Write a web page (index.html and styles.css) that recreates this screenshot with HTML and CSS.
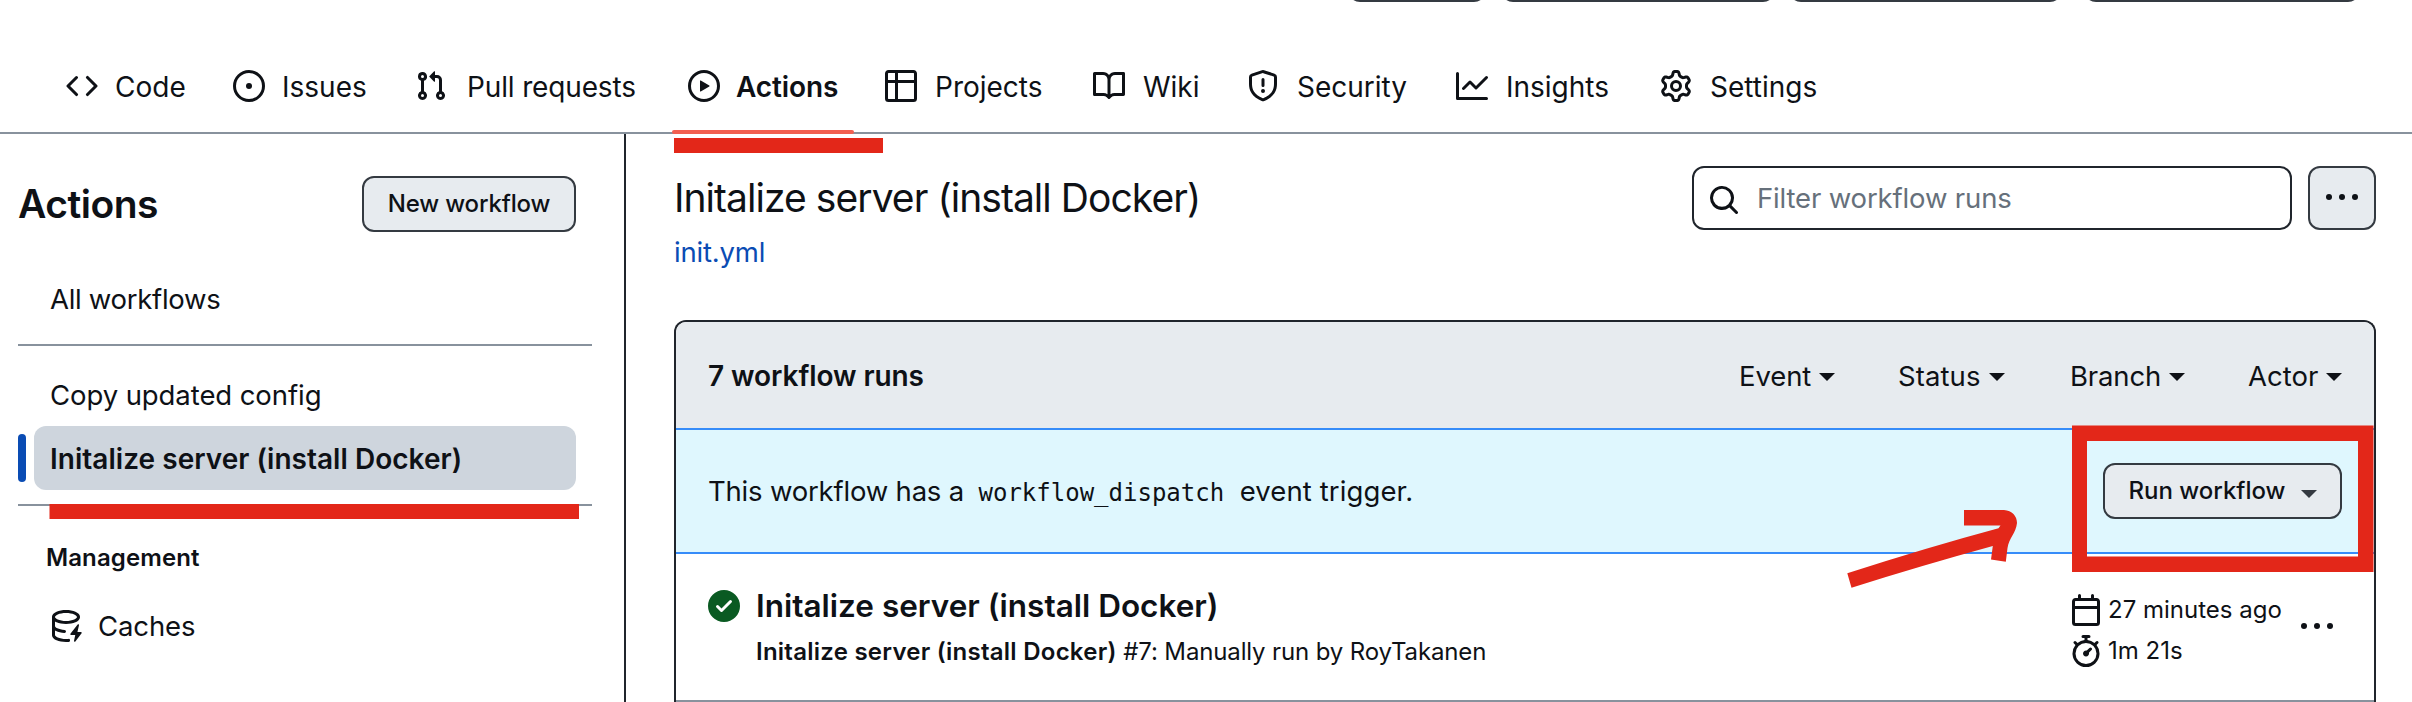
FILE: index.html
```html
<!DOCTYPE html>
<html lang="en">
<head>
<meta charset="utf-8">
<title>Actions</title>
<link rel="stylesheet" href="styles.css">
</head>
<body>
<header class="top">
  <div class="repo-buttons"><i class="rb rb-a"></i><i class="rb rb-b"></i><i class="rb rb-c"></i><i class="rb rb-d"></i></div>
  <nav class="tabs">
    <a class="tab tab-near"><svg class="icon" viewBox="0 0 16 16"><path d="M4.72 3.22a.75.75 0 0 1 1.06 1.06L2.06 8l3.72 3.72a.75.75 0 1 1-1.06 1.06L.47 8.53a.75.75 0 0 1 0-1.06l4.25-4.25Zm6.56 0a.75.75 0 1 0-1.06 1.06L13.94 8l-3.72 3.72a.75.75 0 1 0 1.06 1.06l4.25-4.25a.75.75 0 0 0 0-1.06l-4.25-4.25Z"/></svg><span class="t">Code</span></a>
    <a class="tab tab-near"><svg class="icon" viewBox="0 0 16 16"><path d="M8 9.5a1.5 1.5 0 1 0 0-3 1.5 1.5 0 0 0 0 3Z"/><path d="M8 0a8 8 0 1 1 0 16A8 8 0 0 1 8 0ZM1.5 8a6.5 6.5 0 1 0 13 0 6.5 6.5 0 0 0-13 0Z"/></svg><span class="t">Issues</span></a>
    <a class="tab tab-pulls"><svg class="icon" viewBox="0 0 16 16"><path d="M1.5 3.25a2.25 2.25 0 1 1 3 2.122v5.256a2.251 2.251 0 1 1-1.5 0V5.372A2.25 2.25 0 0 1 1.5 3.25Zm5.677-.177L9.573.677A.25.25 0 0 1 10 .854V2.5h1A2.5 2.5 0 0 1 13.5 5v5.628a2.251 2.251 0 1 1-1.5 0V5a1 1 0 0 0-1-1h-1v1.646a.25.25 0 0 1-.427.177L7.177 3.427a.25.25 0 0 1 0-.354ZM3.75 2.5a.75.75 0 1 0 0 1.5.75.75 0 0 0 0-1.5Zm0 9.5a.75.75 0 1 0 0 1.5.75.75 0 0 0 0-1.5Zm8.25.75a.75.75 0 1 0 1.5 0 .75.75 0 0 0-1.5 0Z"/></svg><span class="t">Pull requests</span></a>
    <a class="tab tab-current"><svg class="icon" viewBox="0 0 16 16"><path d="M8 0a8 8 0 1 1 0 16A8 8 0 0 1 8 0ZM1.5 8a6.5 6.5 0 1 0 13 0 6.5 6.5 0 0 0-13 0Zm4.879-2.773 4.264 2.559a.25.25 0 0 1 0 .428l-4.264 2.559A.25.25 0 0 1 6 10.559V5.442a.25.25 0 0 1 .379-.215Z"/></svg><span class="t">Actions</span></a>
    <a class="tab"><svg class="icon" viewBox="0 0 16 16"><path d="M0 1.75C0 .784.784 0 1.75 0h12.5C15.216 0 16 .784 16 1.75v12.5A1.75 1.75 0 0 1 14.25 16H1.75A1.75 1.75 0 0 1 0 14.25ZM6.5 6.5v8h7.75a.25.25 0 0 0 .25-.25V6.5Zm8-1.5V1.75a.25.25 0 0 0-.25-.25H6.5V5Zm-13 1.5v7.75c0 .138.112.25.25.25H5v-8ZM5 5V1.5H1.75a.25.25 0 0 0-.25.25V5Z"/></svg><span class="t">Projects</span></a>
    <a class="tab"><svg class="icon" viewBox="0 0 16 16"><path d="M0 1.75A.75.75 0 0 1 .75 1h4.253c1.227 0 2.317.59 3 1.501A3.743 3.743 0 0 1 11.006 1h4.245a.75.75 0 0 1 .75.75v10.5a.75.75 0 0 1-.75.75h-4.507a2.25 2.25 0 0 0-1.591.659l-.622.621a.75.75 0 0 1-1.06 0l-.622-.621A2.25 2.25 0 0 0 5.258 13H.75a.75.75 0 0 1-.75-.75Zm7.251 10.324.004-5.073-.002-2.253A2.25 2.25 0 0 0 5.003 2.5H1.5v9h3.757a3.75 3.75 0 0 1 1.994.574ZM8.755 4.75l-.004 7.322a3.752 3.752 0 0 1 1.992-.572H14.5v-9h-3.495a2.25 2.25 0 0 0-2.25 2.25Z"/></svg><span class="t">Wiki</span></a>
    <a class="tab"><svg class="icon" viewBox="0 0 16 16"><path d="M7.467.133a1.748 1.748 0 0 1 1.066 0l5.25 1.68A1.75 1.75 0 0 1 15 3.48V7c0 1.566-.32 3.182-1.303 4.682-.983 1.498-2.585 2.813-5.032 3.855a1.697 1.697 0 0 1-1.33 0c-2.447-1.042-4.049-2.357-5.032-3.855C1.32 10.182 1 8.566 1 7V3.48a1.75 1.75 0 0 1 1.217-1.667Zm.61 1.429a.25.25 0 0 0-.153 0l-5.25 1.68a.25.25 0 0 0-.174.238V7c0 1.358.275 2.666 1.057 3.86.784 1.194 2.121 2.34 4.366 3.297a.196.196 0 0 0 .154 0c2.245-.956 3.582-2.104 4.366-3.298C13.225 9.666 13.5 8.36 13.5 7V3.48a.251.251 0 0 0-.174-.237l-5.25-1.68ZM8.75 4.75v3a.75.75 0 0 1-1.5 0v-3a.75.75 0 0 1 1.5 0ZM9 10.5a1 1 0 1 1-2 0 1 1 0 0 1 2 0Z"/></svg><span class="t">Security</span></a>
    <a class="tab"><svg class="icon" viewBox="0 0 16 16"><path d="M1.5 1.75V13.5h13.75a.75.75 0 0 1 0 1.5H.75a.75.75 0 0 1-.75-.75V1.75a.75.75 0 0 1 1.5 0Zm14.28 2.53-5.25 5.25a.75.75 0 0 1-1.06 0L7 7.06 4.28 9.78a.751.751 0 0 1-1.042-.018.751.751 0 0 1-.018-1.042l3.25-3.25a.75.75 0 0 1 1.06 0L10 7.94l4.72-4.72a.751.751 0 0 1 1.042.018.751.751 0 0 1 .018 1.042Z"/></svg><span class="t">Insights</span></a>
    <a class="tab"><svg class="icon" viewBox="0 0 16 16"><path d="M8 0a8.2 8.2 0 0 1 .701.031C9.444.095 9.99.645 10.16 1.29l.288 1.107c.018.066.079.158.212.224.231.114.454.243.668.386.123.082.233.09.299.071l1.103-.303c.644-.176 1.392.021 1.82.63.27.385.506.792.704 1.218.315.675.111 1.422-.364 1.891l-.814.806c-.049.048-.098.147-.088.294.016.257.016.515 0 .772-.01.147.038.246.088.294l.814.806c.475.469.679 1.216.364 1.891a7.977 7.977 0 0 1-.704 1.217c-.428.61-1.176.807-1.82.63l-1.102-.302c-.067-.019-.177-.011-.3.071a5.909 5.909 0 0 1-.668.386c-.133.066-.194.158-.211.224l-.29 1.106c-.168.646-.715 1.196-1.458 1.26a8.006 8.006 0 0 1-1.402 0c-.743-.064-1.289-.614-1.458-1.26l-.289-1.106c-.018-.066-.079-.158-.212-.224a5.738 5.738 0 0 1-.668-.386c-.123-.082-.233-.09-.299-.071l-1.103.303c-.644.176-1.392-.021-1.82-.63a8.12 8.12 0 0 1-.704-1.218c-.315-.675-.111-1.422.363-1.891l.815-.806c.05-.048.098-.147.088-.294a6.214 6.214 0 0 1 0-.772c.01-.147-.038-.246-.088-.294l-.815-.806C.635 6.045.431 5.298.746 4.623a7.92 7.92 0 0 1 .704-1.217c.428-.61 1.176-.807 1.82-.63l1.102.302c.067.019.177.011.3-.071.214-.143.437-.272.668-.386.133-.066.194-.158.211-.224l.29-1.106C6.009.645 6.556.095 7.299.03 7.53.01 7.764 0 8 0Zm-.571 1.525c-.036.003-.108.036-.137.146l-.289 1.105c-.147.561-.549.967-.998 1.189-.173.086-.34.183-.5.29-.417.278-.97.423-1.529.27l-1.103-.303c-.109-.03-.175.016-.195.045-.22.312-.412.644-.573.99-.014.031-.021.11.059.19l.815.806c.411.406.562.957.53 1.456a4.709 4.709 0 0 0 0 .582c.032.499-.119 1.05-.53 1.456l-.815.806c-.081.08-.073.159-.059.19.162.346.353.677.573.989.02.03.085.076.195.046l1.102-.303c.56-.153 1.113-.008 1.53.27.161.107.328.204.501.29.447.222.85.629.997 1.189l.289 1.105c.029.109.101.143.137.146a6.6 6.6 0 0 0 1.142 0c.036-.003.108-.036.137-.146l.289-1.105c.147-.561.549-.967.998-1.189.173-.086.34-.183.5-.29.417-.278.97-.423 1.529-.27l1.103.303c.109.029.175-.016.195-.045.22-.313.411-.644.573-.99.014-.031.021-.11-.059-.19l-.815-.806c-.411-.406-.562-.957-.53-1.456a4.709 4.709 0 0 0 0-.582c-.032-.499.119-1.05.53-1.456l.815-.806c.081-.08.073-.159.059-.19a6.464 6.464 0 0 0-.573-.989c-.02-.03-.085-.076-.195-.046l-1.102.303c-.56.153-1.113.008-1.53-.27a4.44 4.44 0 0 0-.501-.29c-.447-.222-.85-.629-.997-1.189l-.289-1.105c-.029-.11-.101-.143-.137-.146a6.6 6.6 0 0 0-1.142 0ZM11 8a3 3 0 1 1-6 0 3 3 0 0 1 6 0ZM9.5 8a1.5 1.5 0 1 0-3.001.001A1.5 1.5 0 0 0 9.5 8Z"/></svg><span class="t">Settings</span></a>
  </nav>
</header>
<div class="page">
  <aside class="sidebar">
    <div class="side-head"><h2 class="side-title">Actions</h2><button class="btn btn-new">New workflow</button></div>
    <a class="side-item side-all">All workflows</a>
    <hr class="rule rule-first">
    <a class="side-item side-copy">Copy updated config</a>
    <a class="side-item side-current">Initalize server (install Docker)</a>
    <hr class="rule">
    <h3 class="side-group">Management</h3>
    <a class="side-item side-caches"><svg class="icon" viewBox="0 0 16 16"><path d="M2.5 5.724V8c0 .248.238.7 1.169 1.159.874.43 2.144.745 3.62.822a.75.75 0 1 1-.078 1.498c-1.622-.085-3.102-.432-4.204-.975a5.565 5.565 0 0 1-.507-.28V12.5c0 .133.058.318.282.551.227.237.591.483 1.101.707 1.015.447 2.47.742 4.117.742.406 0 .802-.018 1.183-.052a.751.751 0 1 1 .134 1.494C8.89 15.98 8.45 16 8 16c-1.805 0-3.475-.32-4.721-.869-.623-.274-1.173-.619-1.579-1.041-.408-.425-.7-.964-.7-1.59v-9c0-.626.292-1.165.7-1.591.406-.42.956-.766 1.579-1.04C4.525.32 6.195 0 8 0c1.806 0 3.476.32 4.721.869.623.274 1.173.619 1.579 1.041.408.425.7.964.7 1.59 0 .626-.292 1.165-.7 1.591-.406.42-.956.766-1.578 1.04C11.476 6.68 9.806 7 8 7c-1.805 0-3.475-.32-4.721-.869a6.15 6.15 0 0 1-.779-.407Zm0-2.224c0 .133.058.318.282.551.227.237.591.483 1.101.707C4.898 5.205 6.353 5.5 8 5.5c1.646 0 3.101-.295 4.118-.742.508-.224.873-.471 1.1-.708.224-.232.282-.417.282-.55 0-.133-.058-.318-.282-.551-.227-.237-.591-.483-1.101-.707C11.102 1.795 9.647 1.5 8 1.5c-1.646 0-3.101.295-4.118.742-.508.224-.873.471-1.1.708-.224.232-.282.417-.282.55Z"/><path d="M14.49 7.582a.375.375 0 0 0-.66-.313l-3.625 4.625a.375.375 0 0 0 .295.606h2.127l-.619 2.922a.375.375 0 0 0 .666.304l3.125-4.125A.375.375 0 0 0 15.5 11h-1.778l.769-3.418Z"/></svg>Caches</a>
  </aside>
  <main class="main">
    <div class="main-head">
      <div class="main-titles"><h1 class="title">Initalize server (install Docker)</h1><a class="file">init.yml</a></div>
      <div class="search"><svg class="icon" viewBox="0 0 16 16"><path d="M10.68 11.74a6 6 0 0 1-7.922-8.982 6 6 0 0 1 8.982 7.922l3.04 3.04a.749.749 0 1 1-1.06 1.06l-3.04-3.04ZM11.5 7a4.499 4.499 0 1 0-8.997 0A4.499 4.499 0 0 0 11.5 7Z"/></svg>Filter workflow runs</div>
      <button class="btn btn-more"><svg class="icon" viewBox="0 0 16 16"><circle cx="1.5" cy="8" r="1.5"/><circle cx="8" cy="8" r="1.5"/><circle cx="14.5" cy="8" r="1.5"/></svg></button>
    </div>
    <section class="runs">
      <div class="runs-head"><strong class="runs-count">7 workflow runs</strong>
        <span class="filter f-event">Event<i class="caret"></i></span><span class="filter f-status">Status<i class="caret"></i></span><span class="filter f-branch">Branch<i class="caret"></i></span><span class="filter f-actor">Actor<i class="caret"></i></span>
      </div>
      <div class="dispatch"><p class="dispatch-text">This workflow has a <code class="code">workflow_dispatch</code> <span class="dispatch-end">event trigger.</span></p><button class="btn btn-run">Run workflow<i class="caret"></i></button></div>
      <div class="run">
        <svg class="icon check" viewBox="0 0 16 16"><path d="M8 16A8 8 0 1 1 8 0a8 8 0 0 1 0 16Zm3.78-9.72a.751.751 0 0 0-.018-1.042.751.751 0 0 0-1.042-.018L6.75 9.19 5.28 7.72a.751.751 0 0 0-1.042.018.751.751 0 0 0-.018 1.042l2 2a.75.75 0 0 0 1.06 0Z"/></svg>
        <div class="run-body"><div class="run-title">Initalize server (install Docker)</div><div class="run-sub"><b class="run-name">Initalize server (install Docker)</b> #7: Manually run by RoyTakanen</div></div>
        <div class="run-meta">
          <div class="meta"><svg class="icon" viewBox="0 0 16 16"><path d="M4.75 0a.75.75 0 0 1 .75.75V2h5V.75a.75.75 0 0 1 1.5 0V2h1.25c.966 0 1.75.784 1.75 1.75v10.5A1.75 1.75 0 0 1 13.25 16H2.75A1.75 1.75 0 0 1 1 14.25V3.75C1 2.784 1.784 2 2.75 2H4V.75A.75.75 0 0 1 4.75 0ZM2.5 7.5v6.75c0 .138.112.25.25.25h10.5a.25.25 0 0 0 .25-.25V7.5Zm10.75-4H2.75a.25.25 0 0 0-.25.25V6h11V3.75a.25.25 0 0 0-.25-.25Z"/></svg>27 minutes ago</div>
          <div class="meta"><svg class="icon" viewBox="0 0 16 16"><path d="M5.75.75A.75.75 0 0 1 6.5 0h3a.75.75 0 0 1 0 1.5h-.75v1l-.001.041a6.724 6.724 0 0 1 3.464 1.435l.007-.006.75-.75a.749.749 0 0 1 1.275.326.749.749 0 0 1-.215.734l-.75.75-.006.007a6.75 6.75 0 1 1-10.548 0L2.72 5.03l-.75-.75a.751.751 0 0 1 .018-1.042.751.751 0 0 1 1.042-.018l.75.75.007.006A6.72 6.72 0 0 1 7.25 2.541V1.5H6.5a.75.75 0 0 1-.75-.75ZM8 14.5a5.25 5.25 0 1 0-.001-10.501A5.25 5.25 0 0 0 8 14.5Zm.389-6.7 1.33-1.33a.75.75 0 1 1 1.061 1.06L9.45 8.861A1.503 1.503 0 0 1 8 10.75a1.499 1.499 0 1 1 .389-2.95Z"/></svg>1m 21s</div>
        </div>
        <svg class="icon run-more" viewBox="0 0 16 16"><circle cx="1.5" cy="8" r="1.5"/><circle cx="8" cy="8" r="1.5"/><circle cx="14.5" cy="8" r="1.5"/></svg>
      </div>
    </section>
  </main>
</div>
<svg class="marks" viewBox="0 0 2412 702">
  <path d="M674 138h209v15H674ZM49.500 504h529.500v15H49.500Z"/>
  <path fill-rule="evenodd" d="M2072 425.500h301.500v146.500H2072ZM2087 441v115.500h271V441Z"/>
  <path d="M1847.300 573.300Q1925 548 1998.500 528.200L2000.500 525.500H1964V510H2004C2012 510.500 2017 516 2017 523C2016 533 2009 538 2007.500 548L2005.800 561.700 1991 559.500 1992.800 546Q1920 566 1851.500 587.700Z"/>
</svg>
</body>
</html>
```
FILE: styles.css
```css
* { box-sizing: border-box; }
body { margin: 0; width: 2412px; height: 702px; overflow: hidden; position: relative; background: #fff; color: #0e1116; font: 400 28px/42px Inter, "Liberation Sans", sans-serif; display: flex; flex-direction: column; }
h1, h2, h3, p, hr { margin: 0; }
.icon { width: 32px; height: 32px; fill: currentColor; flex: none; display: block; }

.top { height: 134px; flex: none; border-bottom: 2px solid #88929d; }
.repo-buttons { height: 38px; display: flex; padding-left: 1348px; }
.rb { height: 2px; overflow: hidden; display: flex; align-items: flex-end; }
.rb::before { content: ""; flex: 1; height: 30px; border: 2px solid #343a41; border-radius: 12px; }
.rb-a { width: 138px; margin-right: 15px; }
.rb-b { width: 274px; margin-right: 14px; }
.rb-c { width: 273px; margin-right: 22px; }
.rb-d { width: 276px; }
.tabs { height: 96px; display: grid; grid-template-columns: 167px 182px 273px 197px 208px 154px 209px 204px 200px; padding-left: 66px; }
.tab { display: flex; gap: 18px; align-items: center; height: 96px; position: relative; white-space: nowrap; }
.tab .t { padding-top: 1px; }
.tab-near { gap: 17px; }
.tab-pulls { gap: 20px; letter-spacing: -.15px; }
.tab-current { gap: 16px; font-weight: 600; letter-spacing: -.1px; }
.tab-current::after { content: ""; position: absolute; left: -16px; bottom: 0; width: 182px; height: 4px; border-radius: 2px; background: #f25f50; }

.page { height: 568px; display: flex; }
.sidebar { width: 626px; flex: none; border-right: 2px solid #20252c; padding: 42px 32px 0 18px; }
.side-head { display: flex; justify-content: space-between; align-items: center; height: 56px; padding-right: 16px; margin-bottom: 34px; }
.side-title { font-size: 39px; line-height: 56px; font-weight: 600; letter-spacing: -.5px; }
.btn { font: 500 24px/40px Inter, "Liberation Sans", sans-serif; color: #0e1116; background: #e7ebef; border: 2px solid #343a41; border-radius: 12px; display: flex; align-items: center; justify-content: center; padding: 0; }
.btn-new { width: 214px; height: 56px; letter-spacing: -.15px; }
.side-item { display: flex; align-items: center; height: 64px; margin: 0 16px; padding: 1px 16px 0; border-radius: 12px; position: relative; }
.side-all { font-size: 27.5px; letter-spacing: -.3px; }
.side-copy { font-size: 27.5px; letter-spacing: -.08px; }
.side-current { background: #ced5dd; font-weight: 600; letter-spacing: .03px; }
.side-current::before { content: ""; position: absolute; left: -16px; top: 8px; width: 8px; height: 48px; border-radius: 6px; background: #0a4cb4; }
.side-caches { font-size: 27.5px; letter-spacing: -.1px; padding-top: 0; gap: 16px; }
.rule { height: 2px; border: 0; background: #88929d; margin-top: 14px; }
.rule-first { margin-bottom: 16px; }
.side-group { font-size: 24px; line-height: 36px; font-weight: 600; margin: 34px 0 18px; padding-left: 28px; letter-spacing: .1px; }

.main { width: 1786px; padding: 32px 36px 0 48px; }
.main-head { display: flex; align-items: flex-start; height: 154px; }
.main-titles { flex: 1; display: flex; flex-direction: column; padding-top: 2px; }
.title { font-size: 39px; line-height: 60px; font-weight: 400; margin-bottom: 3px; letter-spacing: -.95px; }
.file { color: #0a4cb4; font-size: 27.5px; letter-spacing: -.2px; }
.search { width: 600px; height: 64px; border: 2px solid #20252c; border-radius: 12px; display: flex; align-items: center; gap: 17px; padding-left: 14px; color: #66707b; margin-right: 16px; font-size: 27.5px; letter-spacing: -.15px; }
.search .icon { color: #0e1116; margin-top: 4px; }
.btn-more { width: 68px; height: 64px; padding-bottom: 2px; }

.runs { height: 382px; border: 2px solid #20252c; border-bottom: 0; border-radius: 12px 12px 0 0; overflow: hidden; }
.runs-head { height: 106px; background: #e7ebef; display: flex; align-items: center; padding: 1px 32px 0; }
.runs-count { font-weight: 600; flex: 1; letter-spacing: -.07px; }
.filter { display: flex; align-items: center; gap: 8px; font-size: 27.5px; }
.f-event { width: 159px; letter-spacing: -.1px; }
.f-status { width: 172px; letter-spacing: .1px; }
.f-branch { width: 178px; letter-spacing: -.15px; }
.f-actor { width: 94px; }
.caret { width: 0; height: 0; border: 8px solid transparent; border-top-color: currentColor; border-bottom: 0; margin-top: 3px; flex: none; }
.dispatch { height: 126px; background: #dff7fe; border: solid #368cf9; border-width: 2px 0; display: flex; align-items: center; justify-content: space-between; padding: 0 32px; }
.dispatch-text { font-size: 27.5px; letter-spacing: -.2px; }
.dispatch-end { letter-spacing: .1px; }
.code { font: 24px/36px "DejaVu Sans Mono", monospace; letter-spacing: 0; padding: 0 8px 0 7px; }
.btn-run { width: 239px; height: 56px; gap: 15px; }
.btn-run .caret { color: #343a41; margin-top: 6px; }
.run { height: 148px; border-bottom: 2px solid #88929d; display: flex; padding: 0 32px; }
.check { color: #0a5a22; margin: 36px 16px 0 0; }
.run-body { flex: 1; }
.run-title { font-size: 31.5px; line-height: 48px; font-weight: 600; margin-top: 28px; }
.run-sub { font-size: 24px; line-height: 36px; margin-top: 4px; letter-spacing: -.14px; }
.run-name { font-weight: 600; letter-spacing: .25px; }
.run-meta { width: 231px; padding-top: 40px; font-size: 24px; line-height: 32px; display: flex; flex-direction: column; gap: 9px; }
.meta { display: flex; gap: 6px; height: 32px; }
.run-more { margin: 56px 9px 0 0; }

.marks { position: absolute; left: 0; top: 0; width: 2412px; height: 702px; fill: #e32719; }
```
